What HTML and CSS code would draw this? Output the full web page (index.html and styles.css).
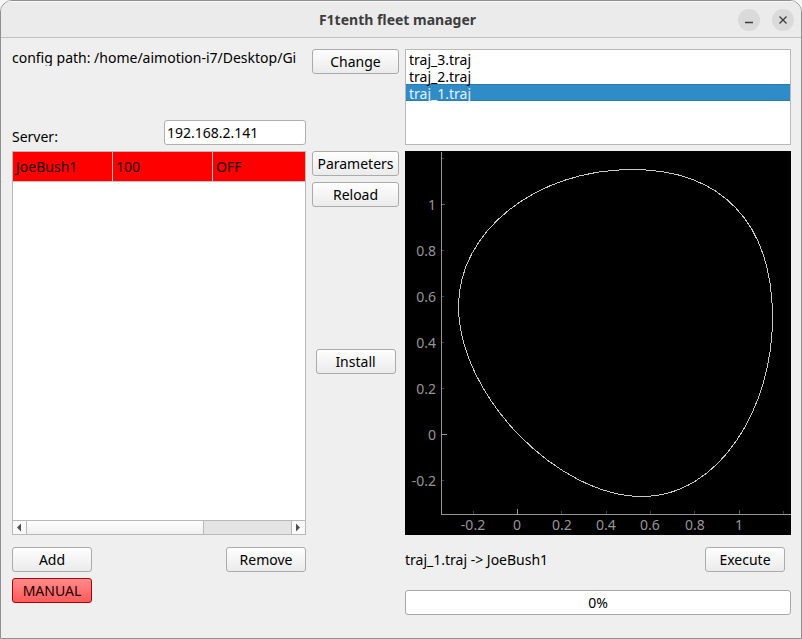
FILE: index.html
```html
<!DOCTYPE html>
<html lang="en">
<head>
<meta charset="utf-8">
<title>F1tenth fleet manager</title>
<link rel="stylesheet" href="styles.css">
</head>
<body>
<div class="window">
  <header class="titlebar">
    <h1 class="title">F1tenth fleet manager</h1>
    <div class="window-controls">
      <button class="round" aria-label="Minimize"><svg width="22" height="22"><path d="M7 13.5h8"/></svg></button>
      <button class="round" aria-label="Close"><svg width="22" height="22"><path d="M7.500 7.500l7 7M14.500 7.500l-7 7"/></svg></button>
    </div>
  </header>
  <main class="content">
    <section class="config">
      <div class="path">config path: /home/aimotion-i7/Desktop/Gi</div>
      <div class="server">
        <label for="server">Server:</label>
        <input id="server" class="field" type="text" value="192.168.2.141">
      </div>
    </section>
    <div class="actions"><button class="btn">Change</button></div>
    <select class="list" size="5" aria-label="Trajectories">
      <option>traj_3.traj</option>
      <option>traj_2.traj</option>
      <option selected>traj_1.traj</option>
    </select>

    <section class="fleet">
      <div class="fleet-view">
        <table class="cars">
          <tr><td>JoeBush1</td><td>100</td><td>OFF</td></tr>
        </table>
      </div>
      <div class="scrollbar">
        <button class="arrow" aria-label="Scroll left"><svg width="13" height="13"><path d="M8 2.500v8l-4-4z"/></svg></button>
        <div class="track"><div class="thumb"></div></div>
        <button class="arrow" aria-label="Scroll right"><svg width="13" height="13"><path d="M4 2.500v8l4-4z"/></svg></button>
      </div>
    </section>
    <div class="actions">
      <button class="btn">Parameters</button>
      <button class="btn">Reload</button>
      <button class="btn install">Install</button>
    </div>
    <div class="plot">
      <svg viewBox="0 0 386 384" role="img" aria-label="Trajectory plot">
        <path class="axis" d="M36.5 1V364M36 363.5H386M37 283.5h5M112.5 363v-5"/>
        <path class="tick-mid" d="M37 53.5h3M334.5 363v-4"/>
        <path class="tick" d="M37 7.5h2M37 99.5h2M37 145.5h2M37 191.5h2M37 237.5h2M37 329.5h2M68.5 363v-3M156.5 363v-3M201.5 363v-3M245.5 363v-3M289.5 363v-3M378.5 363v-3"/>
        <g class="labels-y">
          <text x="31" y="59">1</text><text x="31" y="105">0.8</text><text x="31" y="151">0.6</text><text x="31" y="197">0.4</text><text x="31" y="243">0.2</text><text x="31" y="289">0</text><text x="31" y="335">-0.2</text>
        </g>
        <g class="labels-x">
          <text x="68" y="379">-0.2</text><text x="112" y="379">0</text><text x="157" y="379">0.2</text><text x="201" y="379">0.4</text><text x="245" y="379">0.6</text><text x="290" y="379">0.8</text><text x="334" y="379">1</text>
        </g>
        <path class="curve" d="M53.5 155C53.5 80 131.5 18.5 227 18.5C317 18.5 367.5 72 367.5 167C367.5 256 315 345.5 237 345.5C153 345.5 53.5 244.5 53.5 155Z"/>
      </svg>
    </div>

    <section class="fleet-buttons">
      <button class="btn">Add</button>
      <button class="btn">Remove</button>
      <button class="btn manual">MANUAL</button>
    </section>
    <section class="run">
      <div class="run-row">
        <span>traj_1.traj -&gt; JoeBush1</span>
        <button class="btn">Execute</button>
      </div>
      <div class="progress">
        <progress id="upload" value="0" max="100"></progress>
        <label for="upload">0%</label>
      </div>
    </section>
  </main>
</div>
</body>
</html>
```
FILE: styles.css
```css
* { box-sizing: border-box; }
body {
  margin: 0;
  background: #f6f6f6;
  color: #000;
  font: 14px/17px "Noto Sans", "Open Sans", sans-serif;
}
button, input, select { font: inherit; color: inherit; margin: 0; }
.window {
  min-height: 100vh;
  display: flex;
  flex-direction: column;
  background: #efefef;
  border: 1px solid #8f8f8f;
  border-radius: 12px 12px 0 0;
  overflow: hidden;
}
.titlebar {
  display: grid;
  grid-template-columns: 1fr auto 1fr;
  align-items: center;
  height: 37px;
  padding-right: 7px;
  background: #ebebeb;
  border-top: 1px solid #f9f9f9;
  border-bottom: 1px solid #bfbfbf;
}
.title {
  grid-column: 2;
  margin: 0;
  font-size: 14px;
  line-height: 20px;
  color: #3d3d3d;
}
.window-controls { display: flex; gap: 12px; justify-content: flex-end; }
.round {
  width: 22px;
  height: 22px;
  padding: 0;
  border: 0;
  border-radius: 50%;
  background: #dadada;
}
.round svg { display: block; fill: none; stroke: #3d3d3d; stroke-width: 1.3; }
.content {
  flex: 1;
  display: grid;
  grid-template-columns: 294px 87px minmax(0, 1fr);
  grid-template-rows: 96px 1fr auto;
  gap: 6px;
  padding: 11px 10px 23px 11px;
}
.config { display: flex; flex-direction: column; justify-content: space-between; }
.path { overflow: hidden; white-space: nowrap; }
.server { display: flex; justify-content: space-between; align-items: flex-end; }
.field {
  width: 142px;
  height: 25px;
  padding: 0 2px;
  border: 1px solid #b0b0b0;
  border-radius: 3px;
  background: #fff;
}
.actions { display: flex; flex-direction: column; gap: 6px; }
.btn {
  min-width: 80px;
  height: 25px;
  padding: 0;
  border: 1px solid #ababab;
  border-radius: 3px;
  background: linear-gradient(#fefefe, #ebebeb);
  line-height: 23px;
  white-space: nowrap;
}
.install { align-self: center; margin-top: 136px; }
.list {
  width: 100%;
  height: 96px;
  padding: 0;
  border: 1px solid #b8b8b8;
  border-radius: 0;
  background: #fff;
  outline: 0;
  overflow: hidden;
}
.list option {
  height: 17px;
  min-height: 17px;
  padding: 0 3px;
  line-height: 17px;
}
.list option:checked {
  background: linear-gradient(#2a7bae 1px, #308cc6 1px, #308cc6 16px, #2a7bae 16px);
  -webkit-text-fill-color: #e4f1f9;
}
.fleet {
  display: flex;
  flex-direction: column;
  border: 1px solid #b8b8b8;
  background: #fff;
}
.fleet-view { flex: 1; overflow: hidden; }
.cars { width: 100%; table-layout: fixed; border-collapse: separate; border-spacing: 0; }
.cars td {
  height: 30px;
  padding: 0 3px;
  background: #f00;
  border-right: 1px solid #c0c0c0;
  border-bottom: 1px solid #c0c0c0;
  color: #1a0000;
}
.cars td:nth-child(-n+2) { width: 100px; }
.cars td:last-child { border-right: 0; }
.scrollbar { display: flex; height: 14px; border-top: 1px solid #b8b8b8; }
.arrow { width: 13px; height: 13px; padding: 0; border: 0; background: #fafafa; }
.arrow svg { display: block; fill: #505050; }
.track {
  flex: 1;
  background: #e4e4e4;
  border: 1px solid #b8b8b8;
  border-width: 0 1px;
}
.thumb {
  width: 67%;
  height: 100%;
  background: linear-gradient(#fefefe, #f0f0f0);
  border-right: 1px solid #b8b8b8;
}
.plot { background: #000; min-height: 0; }
.plot svg { display: block; width: 100%; height: 100%; font-size: 14px; fill: #969696; }
.plot path { fill: none; shape-rendering: crispEdges; }
.axis { stroke: #969696; }
.tick-mid { stroke: #606060; }
.tick { stroke: #3c3c3c; }
.plot .curve { stroke: #c8c8c8; }
.labels-y { text-anchor: end; }
.labels-x { text-anchor: middle; }
.fleet-buttons {
  grid-column: 1 / 3;
  display: grid;
  grid-template-columns: 80px 80px;
  justify-content: space-between;
  align-content: start;
  gap: 6px;
  width: 294px;
  padding-top: 6px;
}
.manual { border-color: #b40000; background: linear-gradient(#ff8c8c, #ff5a5a); color: #200000; }
.run { display: flex; flex-direction: column; gap: 18px; padding-top: 6px; }
.run-row { display: flex; align-items: center; justify-content: space-between; padding-right: 6px; }
.progress { display: grid; height: 25px; }
.progress > * { grid-area: 1 / 1; }
.progress label { place-self: center; }
progress {
  appearance: none;
  width: 100%;
  height: 25px;
  border: 1px solid #a8a8a8;
  border-radius: 3px;
  background: #fff;
}
progress::-webkit-progress-bar { background: transparent; }
progress::-webkit-progress-value { background: #308cc6; }
```
